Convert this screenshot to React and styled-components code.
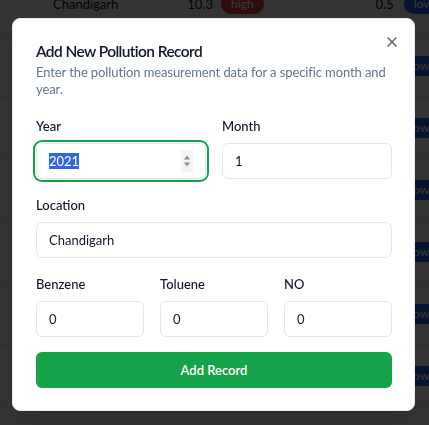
import React, { useEffect, useRef } from "react";
import styled, { createGlobalStyle, css } from "styled-components";
import { X } from "lucide-react";

const GlobalStyle = createGlobalStyle`
  html, body {
    margin: 0;
    padding: 0;
    background: #ffffff;
    overflow: hidden;
    font-family: Lato, "Open Sans", sans-serif;
    color: #0f172a;
  }
  * {
    box-sizing: border-box;
  }
`;

const Page = styled.div`
  width: 429px;
  height: 425px;
  overflow: hidden;
`;

const Table = styled.div`
  margin-top: -27px;
`;

const Row = styled.div`
  display: flex;
  align-items: center;
  height: 62px;
  padding-left: 53px;
  border-bottom: 1px solid #e5e7eb;
  font-size: 13px;
  white-space: nowrap;

  & > * {
    flex-shrink: 0;
  }
`;

const City = styled.span`
  width: 120px;
`;

const Value = styled.span`
  width: ${(p) => p.$width}px;
  text-align: right;
`;

const Badge = styled.span`
  display: inline-flex;
  align-items: center;
  height: 20px;
  margin-left: ${(p) => p.$gap}px;
  padding: 0 10px;
  border-radius: 9999px;
  font-size: 12px;
  font-weight: 600;
  color: #ffffff;
  background: ${(p) => (p.$level === "high" ? "#ef4444" : "#2563eb")};
`;

const Overlay = styled.div`
  position: fixed;
  inset: 0;
  background: rgba(0, 0, 0, 0.8);
`;

const Dialog = styled.div`
  position: fixed;
  left: 12px;
  top: 18px;
  width: 403px;
  padding: 25px 22px 22px 23px;
  background: #ffffff;
  border: 1px solid #e2e8f0;
  border-radius: 8px;
  box-shadow: 0 10px 15px -3px rgba(0, 0, 0, 0.1);
`;

const Close = styled.button`
  position: absolute;
  top: 15px;
  right: 14px;
  display: flex;
  padding: 0;
  border: 0;
  background: none;
  color: #0f172a;
  opacity: 0.7;
  cursor: pointer;
`;

const Header = styled.div`
  display: flex;
  flex-direction: column;
  gap: 5px;
`;

const Title = styled.h2`
  margin: 0;
  font-size: 15.5px;
  line-height: 15px;
  font-weight: 600;
  letter-spacing: -0.6px;
  color: #0f172a;
`;

const Description = styled.p`
  margin: 0;
  font-size: 13px;
  line-height: 17px;
  letter-spacing: -0.1px;
  color: #64748b;
`;

const Form = styled.form`
  display: flex;
  flex-direction: column;
  gap: 19px;
  margin-top: 21px;
`;

const Grid = styled.div`
  display: grid;
  grid-template-columns: repeat(${(p) => p.$cols}, 1fr);
  gap: 16px;
`;

const Field = styled.div`
  display: flex;
  flex-direction: column;
  gap: 10px;
`;

const Label = styled.label`
  font-size: 13px;
  line-height: 14px;
  font-weight: 500;
  color: #0f172a;
`;

const InputWrap = styled.div`
  position: relative;
`;

const Input = styled.input`
  width: 100%;
  height: 36px;
  padding: 0 12px;
  border: 1px solid #e2e8f0;
  border-radius: 6px;
  background: #ffffff;
  font-family: inherit;
  font-size: 13px;
  color: #0f172a;
  outline: none;
  -moz-appearance: textfield;

  &::-webkit-inner-spin-button,
  &::-webkit-outer-spin-button {
    -webkit-appearance: none;
    margin: 0;
  }

  &::selection {
    background: #3367d6;
    color: #ffffff;
  }

  ${(p) =>
    p.$focused &&
    css`
      box-shadow: 0 0 0 1px #ffffff, 0 0 0 3px #16a34a;
    `}
`;

const Spinner = styled.svg`
  position: absolute;
  right: 13px;
  top: 7px;
  pointer-events: none;
`;

const Submit = styled.button`
  height: 36px;
  margin-top: -4px;
  border: 0;
  border-radius: 6px;
  background: #16a34a;
  color: #ffffff;
  font-family: inherit;
  font-size: 13px;
  font-weight: 600;
  cursor: pointer;
`;

const rows = [
  { city: "Chandigarh", a: "10.3", aLevel: "high", b: "0.5", bLevel: "low" },
  { city: "Chandigarh", a: "4.1", aLevel: "low", b: "0.3", bLevel: "low" },
  { city: "Chandigarh", a: "3.8", aLevel: "low", b: "0.2", bLevel: "low" },
  { city: "Chandigarh", a: "2.9", aLevel: "low", b: "0.4", bLevel: "low" },
  { city: "Chandigarh", a: "5.2", aLevel: "low", b: "0.6", bLevel: "low" },
  { city: "Chandigarh", a: "3.3", aLevel: "low", b: "0.1", bLevel: "low" },
  { city: "Chandigarh", a: "4.7", aLevel: "low", b: "0.5", bLevel: "low" },
];

const App = () => {
  const yearRef = useRef(null);

  useEffect(() => {
    if (yearRef.current) {
      yearRef.current.focus();
      yearRef.current.select();
    }
  }, []);

  return (
    <>
      <GlobalStyle />
      <Page>
        <Table>
          {rows.map((row, i) => (
            <Row key={i}>
              <City>{row.city}</City>
              <Value $width={40}>{row.a}</Value>
              <Badge $gap={8} $level={row.aLevel}>
                {row.aLevel}
              </Badge>
              <Value $width={130}>{row.b}</Value>
              <Badge $gap={10} $level={row.bLevel}>
                {row.bLevel}
              </Badge>
            </Row>
          ))}
        </Table>
      </Page>

      <Overlay />

      <Dialog role="dialog">
        <Header>
          <Title>Add New Pollution Record</Title>
          <Description>
            Enter the pollution measurement data for a specific month and year.
          </Description>
        </Header>

        <Form onSubmit={(e) => e.preventDefault()}>
          <Grid $cols={2}>
            <Field>
              <Label htmlFor="year">Year</Label>
              <InputWrap>
                <Input id="year" ref={yearRef} type="number" defaultValue="2021" $focused />
                <Spinner width="12" height="22" viewBox="0 0 12 22">
                  <rect x="0" y="0" width="12" height="22" fill="#f4f4f4" />
                  <path d="M3 9.5 L6 5.5 L9 9.5 Z" fill="#8d8d8d" />
                  <path d="M3 12.5 L6 16.5 L9 12.5 Z" fill="#8d8d8d" />
                </Spinner>
              </InputWrap>
            </Field>
            <Field>
              <Label htmlFor="month">Month</Label>
              <Input id="month" type="number" defaultValue="1" />
            </Field>
          </Grid>

          <Field>
            <Label htmlFor="location">Location</Label>
            <Input id="location" type="text" defaultValue="Chandigarh" />
          </Field>

          <Grid $cols={3}>
            <Field>
              <Label htmlFor="benzene">Benzene</Label>
              <Input id="benzene" type="number" defaultValue="0" />
            </Field>
            <Field>
              <Label htmlFor="toluene">Toluene</Label>
              <Input id="toluene" type="number" defaultValue="0" />
            </Field>
            <Field>
              <Label htmlFor="no">NO</Label>
              <Input id="no" type="number" defaultValue="0" />
            </Field>
          </Grid>

          <Submit type="submit">Add Record</Submit>
        </Form>

        <Close type="button" aria-label="Close">
          <X size={16} strokeWidth={2} />
        </Close>
      </Dialog>
    </>
  );
};

export default App;
